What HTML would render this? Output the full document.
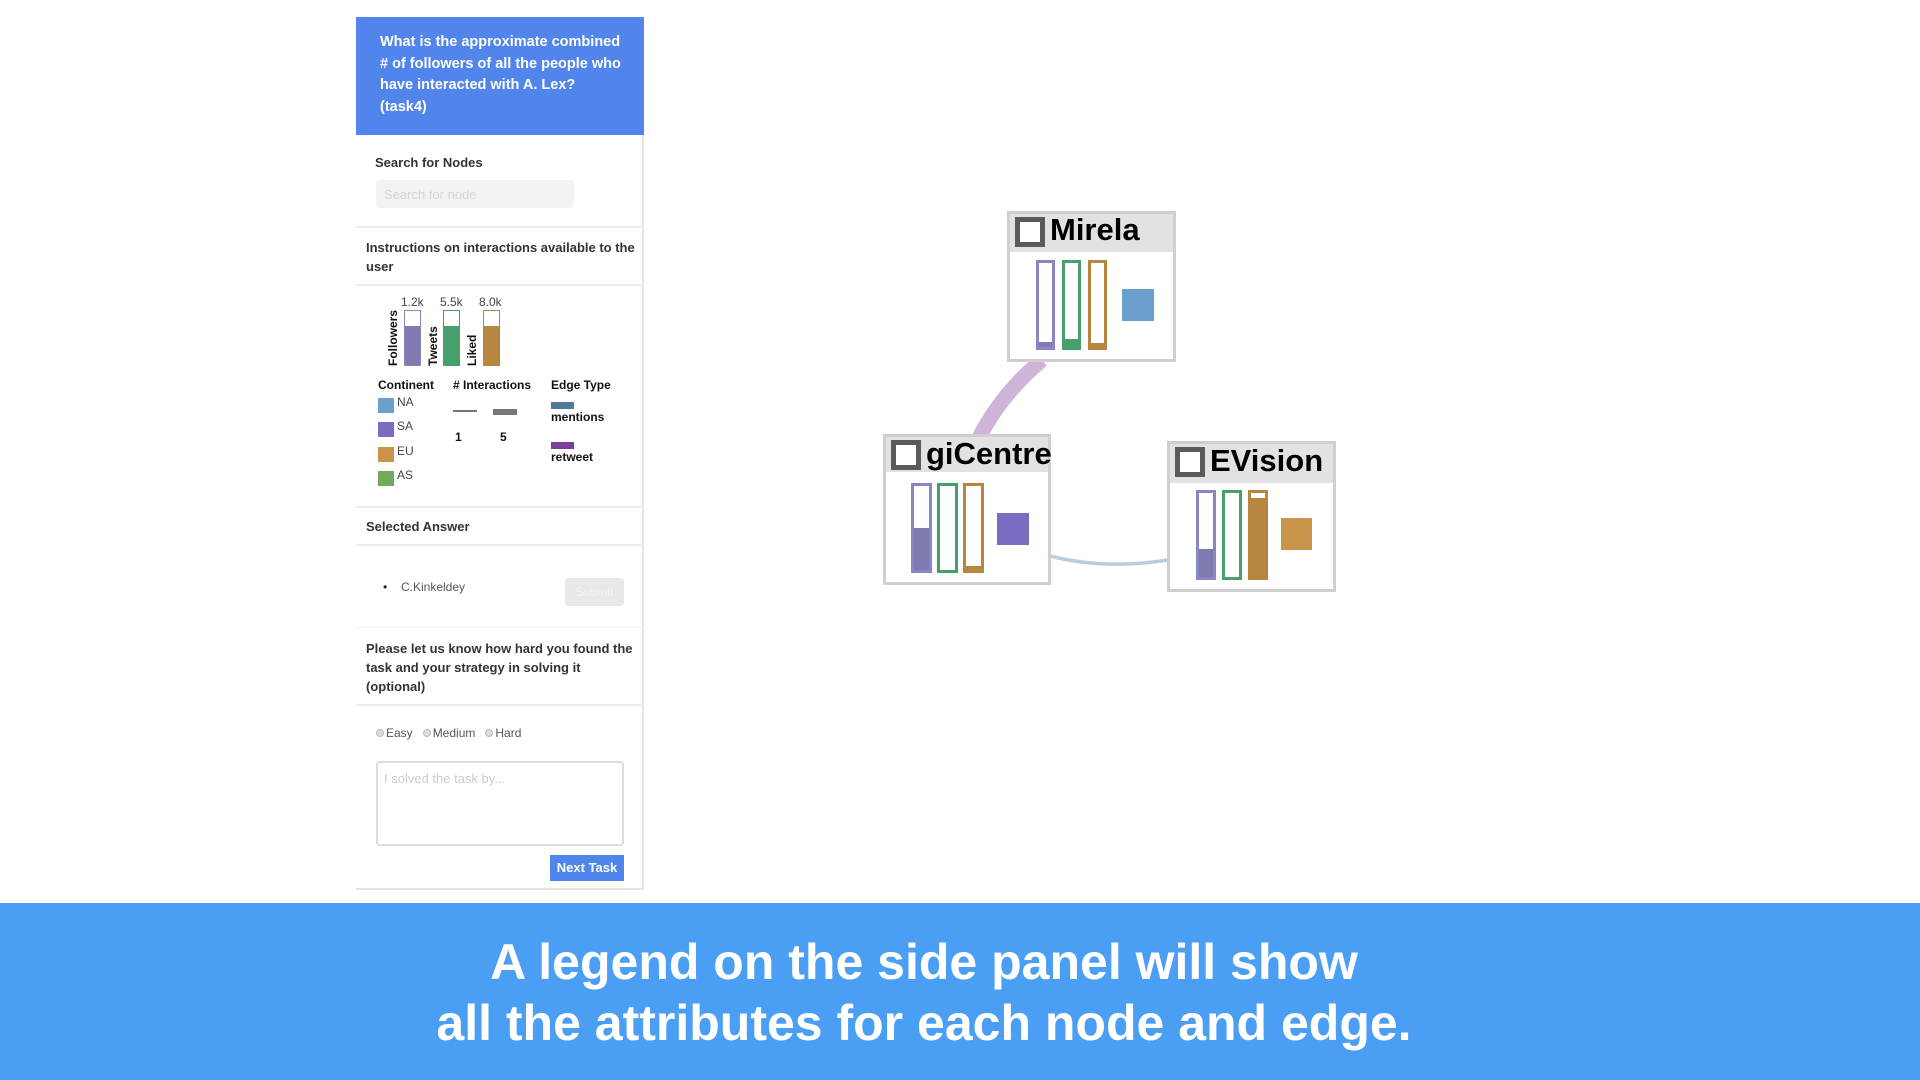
<!DOCTYPE html>
<html><head><meta charset="utf-8"><style>
*{margin:0;padding:0;box-sizing:border-box}
body{width:1920px;height:1080px;background:#fff;position:relative;overflow:hidden;font-family:"Liberation Sans",Arial,sans-serif}
.a{position:absolute}
.panel{left:356px;top:17px;width:288px;height:873px;border-right:2px solid #e4e4e4;border-bottom:2px solid #e4e4e4}
.hdr{left:356px;top:17px;width:288px;height:118px;background:#5185ec;color:#fff;font-weight:bold;font-size:14.5px;line-height:21.5px;padding:15px 20px 0 24px}
.t{font-size:13px;color:#333;font-weight:bold;white-space:nowrap}
.hr{height:2px;background:#ececec;left:356px;width:288px}
.s{font-size:12px;color:#444;white-space:nowrap}
.box{border:3px solid #cfcfcf;background:#fff}
.bh{background:#e2e2e2;position:absolute;left:0;right:0;top:0}
.cb{position:absolute;width:30px;height:30px;border:5px solid #5a5a5a;background:#fff}
.nm{position:absolute;font-size:31px;font-weight:bold;color:#000}
.bar{position:absolute;border:3px solid;background:#fff;overflow:hidden}
.bar i{position:absolute;left:0;right:0;bottom:0;display:block}
.r{display:inline-block;width:8px;height:8px;border-radius:50%;background:#ddd;border:1px solid #bbb;margin-right:2px}
</style></head><body>
<div class="a panel"></div>
<div class="a hdr">What is the approximate combined # of followers of all the people who have interacted with A. Lex? (task4)</div>
<div class="a t" style="left:375px;top:155px">Search for Nodes</div>
<div class="a" style="left:376px;top:180px;width:198px;height:28px;background:#f3f3f3;border-radius:3px;color:#d4d4d4;font-size:13px;padding:7px 8px">Search for node</div>
<div class="a hr" style="top:226px"></div>
<div class="a t" style="left:366px;top:238px;line-height:19px;white-space:normal;width:275px">Instructions on interactions available to the user</div>
<div class="a hr" style="top:284px"></div>
<div class="a s" style="left:401px;top:295px">1.2k</div>
<div class="a s" style="left:440px;top:295px">5.5k</div>
<div class="a s" style="left:479px;top:295px">8.0k</div>
<div class="a bar" style="left:404px;top:310px;width:17px;height:56px;border-color:#8a86c4;border-width:1.5px"><i style="height:39px;background:#7f7bb0"></i></div>
<div class="a bar" style="left:443px;top:310px;width:17px;height:56px;border-color:#45a06c;border-width:1.5px"><i style="height:39px;background:#45a06c"></i></div>
<div class="a bar" style="left:483px;top:310px;width:17px;height:56px;border-color:#b8873f;border-width:1.5px"><i style="height:39px;background:#b8873f"></i></div>
<div class="a t" style="left:386px;top:366px;transform:rotate(-90deg);transform-origin:0 0;font-size:12px;color:#111">Followers</div>
<div class="a t" style="left:426px;top:366px;transform:rotate(-90deg);transform-origin:0 0;font-size:12px;color:#111">Tweets</div>
<div class="a t" style="left:465px;top:366px;transform:rotate(-90deg);transform-origin:0 0;font-size:12px;color:#111">Liked</div>
<div class="a t" style="left:378px;top:378px;font-size:12px;color:#111">Continent</div>
<div class="a t" style="left:453px;top:378px;font-size:12px;color:#111"># Interactions</div>
<div class="a t" style="left:551px;top:378px;font-size:12px;color:#111">Edge Type</div>
<div class="a" style="left:378px;top:398px;width:16px;height:15px;background:#6aa0cb"></div><div class="a s" style="left:397px;top:395px">NA</div>
<div class="a" style="left:378px;top:422px;width:16px;height:15px;background:#7a6cc1"></div><div class="a s" style="left:397px;top:419px">SA</div>
<div class="a" style="left:378px;top:447px;width:16px;height:15px;background:#c8954a"></div><div class="a s" style="left:397px;top:444px">EU</div>
<div class="a" style="left:378px;top:471px;width:16px;height:15px;background:#6faa5f"></div><div class="a s" style="left:397px;top:468px">AS</div>
<div class="a" style="left:453px;top:410px;width:24px;height:1.5px;background:#777"></div>
<div class="a" style="left:493px;top:409px;width:24px;height:6px;background:#777"></div>
<div class="a t" style="left:455px;top:430px;font-size:12px;color:#111">1</div>
<div class="a t" style="left:500px;top:430px;font-size:12px;color:#111">5</div>
<div class="a" style="left:551px;top:402px;width:23px;height:7px;background:#4d7b99"></div>
<div class="a t" style="left:551px;top:410px;font-size:12px;color:#111">mentions</div>
<div class="a" style="left:551px;top:442px;width:23px;height:7px;background:#7d3f9e"></div>
<div class="a t" style="left:551px;top:450px;font-size:12px;color:#111">retweet</div>
<div class="a hr" style="top:506px"></div>
<div class="a t" style="left:366px;top:519px">Selected Answer</div>
<div class="a hr" style="top:544px"></div>
<div class="a s" style="left:383px;top:580px;color:#222">•</div>
<div class="a s" style="left:401px;top:580px;color:#555">C.Kinkeldey</div>
<div class="a" style="left:565px;top:578px;width:59px;height:28px;background:#e8e8e8;border-radius:3px;color:#f4f4f4;font-size:12px;text-align:center;line-height:28px">Submit</div>
<div class="a" style="left:356px;top:627px;width:288px;height:1px;background:#f3f3f3"></div>
<div class="a t" style="left:366px;top:639px;line-height:19px;white-space:normal;width:275px">Please let us know how hard you found the task and your strategy in solving it (optional)</div>
<div class="a hr" style="top:704px"></div>
<div class="a s" style="left:376px;top:726px;color:#555"><span class="r"></span>Easy &nbsp;&nbsp;<span class="r"></span>Medium &nbsp;&nbsp;<span class="r"></span>Hard</div>
<div class="a" style="left:376px;top:761px;width:248px;height:85px;border:2px solid #ddd;border-radius:3px;color:#ccc;font-size:13px;padding:8px 6px">I solved the task by...</div>
<div class="a" style="left:550px;top:855px;width:74px;height:26px;background:#4f86ec;color:#fff;font-weight:bold;font-size:13px;text-align:center;line-height:26px">Next Task</div>

<svg class="a" style="left:0;top:0" width="1920" height="900">
<path d="M1042 360 Q1000 395 978 440" stroke="#cdb4d8" stroke-width="15" fill="none"/>
<path d="M1050 556 Q1105 570 1168 560" stroke="#b9cedb" stroke-width="3.5" fill="none"/>
</svg>

<div class="a box" style="left:1007px;top:211px;width:169px;height:151px"><div class="bh" style="height:38px"></div></div>
<div class="cb" style="left:1015px;top:217px"></div>
<div class="nm" style="left:1050px;top:212px">Mirela</div>
<div class="a bar" style="left:1036px;top:260px;width:19px;height:90px;border-color:#8a86c4"><i style="height:5px;background:#7f7bb0"></i></div>
<div class="a bar" style="left:1062px;top:260px;width:19px;height:90px;border-color:#45a06c"><i style="height:8px;background:#45a06c"></i></div>
<div class="a bar" style="left:1088px;top:260px;width:19px;height:90px;border-color:#b8873f"><i style="height:4px;background:#b8873f"></i></div>
<div class="a" style="left:1122px;top:289px;width:32px;height:32px;background:#6aa0cb"></div>

<div class="a box" style="left:883px;top:434px;width:168px;height:151px"><div class="bh" style="height:35px"></div></div>
<div class="cb" style="left:891px;top:440px"></div>
<div class="nm" style="left:926px;top:436px">giCentre</div>
<div class="a bar" style="left:911px;top:483px;width:21px;height:90px;border-color:#8a86c4"><i style="height:42px;background:#7f7bb0"></i></div>
<div class="a bar" style="left:937px;top:483px;width:21px;height:90px;border-color:#45a06c"><i style="height:0"></i></div>
<div class="a bar" style="left:963px;top:483px;width:21px;height:90px;border-color:#b8873f"><i style="height:4px;background:#b8873f"></i></div>
<div class="a" style="left:997px;top:513px;width:32px;height:32px;background:#7a6cc1"></div>

<div class="a box" style="left:1167px;top:441px;width:169px;height:151px"><div class="bh" style="height:39px"></div></div>
<div class="cb" style="left:1175px;top:447px"></div>
<div class="nm" style="left:1210px;top:443px">EVision</div>
<div class="a bar" style="left:1196px;top:490px;width:20px;height:90px;border-color:#8a86c4"><i style="height:28px;background:#7f7bb0"></i></div>
<div class="a bar" style="left:1222px;top:490px;width:20px;height:90px;border-color:#45a06c"><i style="height:0"></i></div>
<div class="a bar" style="left:1248px;top:490px;width:20px;height:90px;border-color:#b8873f"><i style="height:79px;background:#b8873f"></i></div>
<div class="a" style="left:1281px;top:518px;width:31px;height:32px;background:#c8954a"></div>

<div class="a" style="left:0;top:903px;width:1848px;height:177px;color:#fff;font-weight:bold;font-size:50px;text-align:center;line-height:61px;padding-top:29px;z-index:2;white-space:nowrap">A legend on the side panel will show<br>all the attributes for each node and edge.</div>
<div class="a" style="left:0;top:903px;width:1920px;height:177px;background:#4a9ff5"></div>
</body></html>
